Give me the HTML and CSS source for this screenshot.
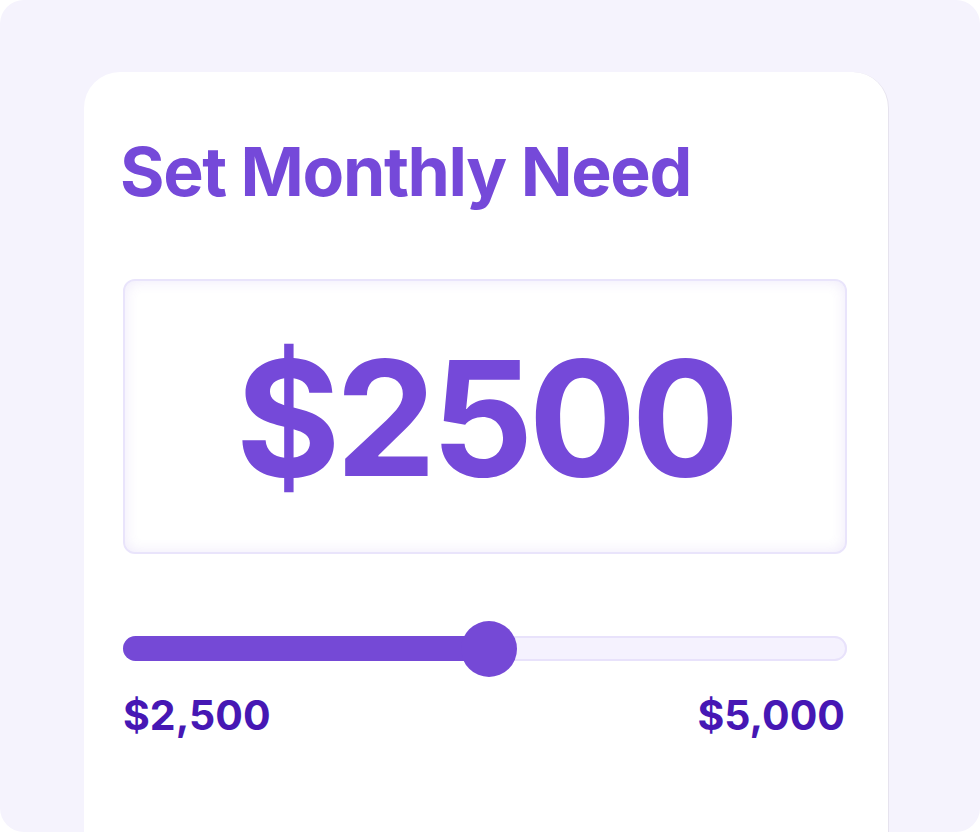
FILE: index.html
```html
<!DOCTYPE html>
<html lang="en">
<head>
    <meta charset="UTF-8">
    <meta name="viewport" content="width=device-width, initial-scale=1.0">
    <title>Set Monthly Need</title>
    <link rel="stylesheet" href="styles.css">
</head>
<body>
    <div class="frame">
        <main class="card">
            <h1>Set Monthly Need</h1>

            <div class="amount-box">
                <span class="amount">$2500</span>
            </div>

            <div class="slider">
                <div class="track">
                    <div class="fill" style="width: 50.6%"></div>
                    <div class="thumb" style="left: 50.6%"></div>
                </div>
                <div class="range-labels">
                    <span>$2,500</span>
                    <span>$5,000</span>
                </div>
            </div>
        </main>
    </div>
</body>
</html>
```

FILE: styles.css
```css
body {
    margin: 0;
    background-color: #ffffff;
    font-family: Inter, "Noto Sans", sans-serif;
}

.frame {
    width: 980px;
    height: 832px;
    background-color: #f5f3fd;
    border-radius: 24px;
    overflow: hidden;
    padding: 72px 0 0 84px;
    box-sizing: border-box;
}

.card {
    width: 805px;
    height: 820px;
    background-color: #ffffff;
    border-radius: 36px;
    border-right: 1px solid #e6e3ee;
    box-sizing: border-box;
    padding: 63px 41px 0 39px;
}

h1 {
    margin: 0 0 72px -3px;
    color: #7549d9;
    font-size: 68px;
    font-weight: 700;
    line-height: 72px;
    letter-spacing: -0.02em;
}

.amount-box {
    height: 275px;
    border: 2px solid #e9e4fb;
    border-radius: 12px;
    box-shadow: inset 0 0 14px rgba(117, 73, 217, 0.12);
    box-sizing: border-box;
    display: flex;
    align-items: center;
    justify-content: center;
}

.amount {
    color: #7549d9;
    font-size: 160px;
    font-weight: 700;
    line-height: 1;
    letter-spacing: -5px;
    margin-top: 2px;
}

.slider {
    margin-top: 82px;
}

.track {
    position: relative;
    height: 25px;
    border-radius: 13px;
    background-color: #f5f2fe;
    box-shadow: inset 0 0 0 2px #e8e2fb;
}

.fill {
    height: 100%;
    border-radius: 13px;
    background-color: #7549d6;
}

.thumb {
    position: absolute;
    top: 50%;
    width: 56px;
    height: 56px;
    border-radius: 50%;
    background-color: #7549d6;
    transform: translate(-50%, -50%);
}

.range-labels {
    display: flex;
    justify-content: space-between;
    margin-top: 30px;
    padding: 0 2px 0 0;
    color: #4617b4;
    font-size: 41px;
    font-weight: 700;
    line-height: 48px;
}
```
